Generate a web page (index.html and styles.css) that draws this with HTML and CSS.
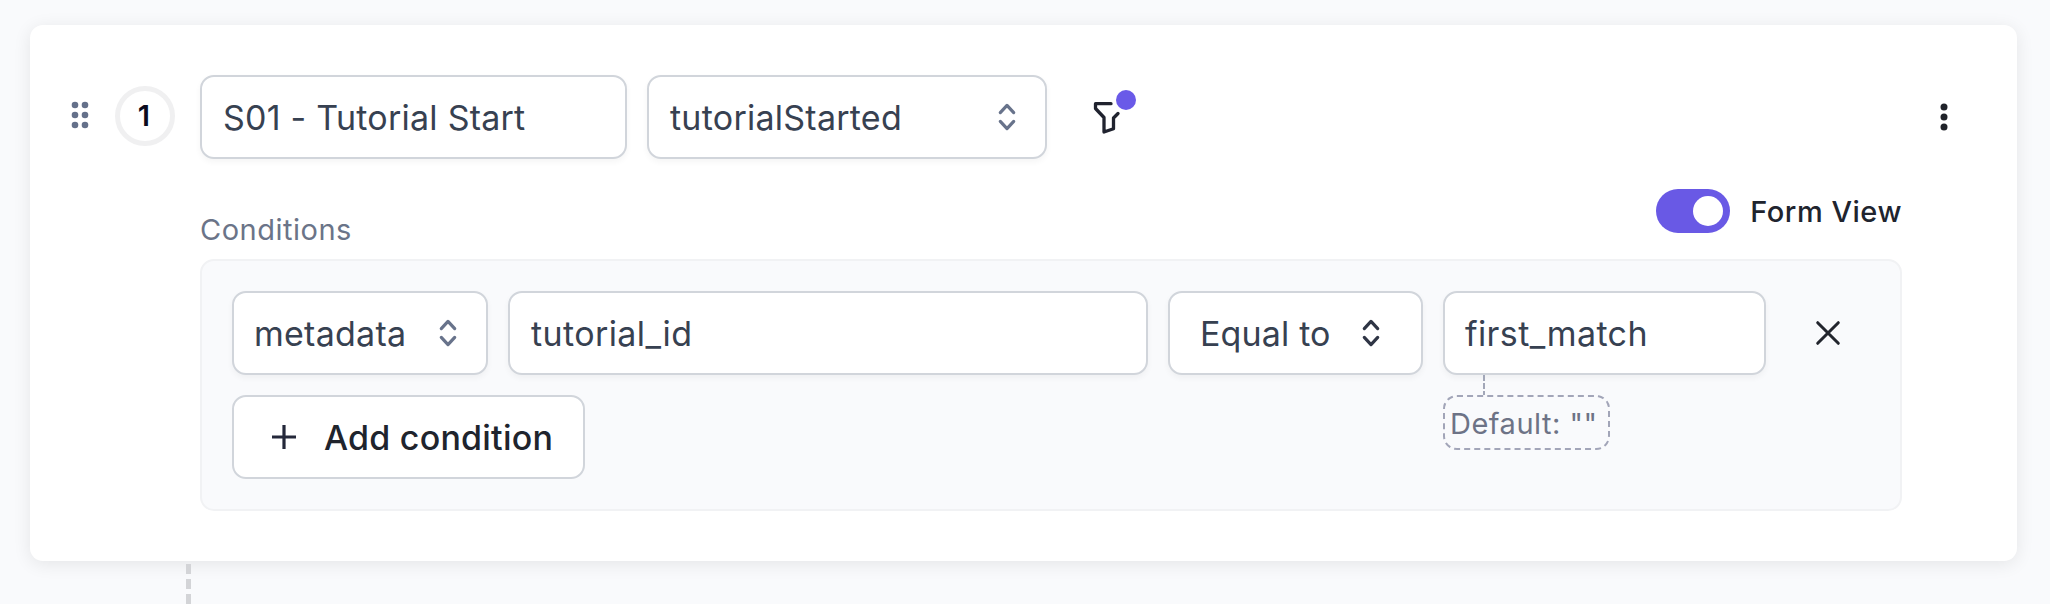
FILE: index.html
```html
<!DOCTYPE html>
<html lang="en">
<head>
<meta charset="utf-8">
<title>Step editor</title>
<link rel="stylesheet" href="styles.css">
</head>
<body>
<main class="card">
  <div class="step-row">
    <svg class="handle" width="20" height="30" viewBox="0 0 20 30" fill="currentColor"><circle cx="5" cy="5" r="3.3"/><circle cx="15" cy="5" r="3.3"/><circle cx="5" cy="15" r="3.3"/><circle cx="15" cy="15" r="3.3"/><circle cx="5" cy="25" r="3.3"/><circle cx="15" cy="25" r="3.3"/></svg>
    <div class="badge">1</div>
    <div class="field name"><span class="t-name">S01 - Tutorial Start</span></div>
    <div class="field event"><span class="t-event">tutorialStarted</span>
      <svg class="chev" width="20" height="30" viewBox="0 0 20 30"><path d="M3.3 10.6 10 3.4l6.7 7.2M3.3 19.4 10 26.6l6.7-7.2"/></svg>
    </div>
    <svg class="filter" width="46" height="46" viewBox="0 0 46 46"><path d="M21 13.7H5.500V18.500L14 27.500V42L23.500 38.800V28L28 23.500"/><circle cx="36" cy="10" r="10"/></svg>
    <svg class="kebab" width="10" height="30" viewBox="0 0 10 30" fill="currentColor"><circle cx="5" cy="5" r="3.500"/><circle cx="5" cy="15" r="3.500"/><circle cx="5" cy="25" r="3.500"/></svg>
  </div>
  <section class="conditions">
    <div class="heading">
      <span class="label">Conditions</span>
      <div class="view"><span class="toggle"><span class="knob"></span></span><span class="view-text">Form View</span></div>
    </div>
    <div class="panel">
      <div class="rule">
        <div class="field source"><span class="t-source">metadata</span>
          <svg class="chev" width="20" height="30" viewBox="0 0 20 30"><path d="M3.3 10.6 10 3.4l6.7 7.2M3.3 19.4 10 26.6l6.7-7.2"/></svg>
        </div>
        <div class="field key"><span class="t-key">tutorial_id</span></div>
        <div class="field operator"><span class="t-op">Equal to</span>
          <svg class="chev dark" width="20" height="30" viewBox="0 0 20 30"><path d="M3.3 10.6 10 3.4l6.7 7.2M3.3 19.4 10 26.6l6.7-7.2"/></svg>
        </div>
        <div class="field value"><span class="t-value">first_match</span>
          <div class="fallback"><span class="stem"></span><span class="hint">Default: ""</span></div>
        </div>
        <svg class="remove" width="28" height="28" viewBox="0 0 28 28"><path d="M3.7 3.7 24.3 24.3M24.3 3.7 3.7 24.3"/></svg>
      </div>
      <div class="add"><svg width="28" height="28" viewBox="0 0 28 28"><path d="M14 2v24M2 14h24"/></svg><span class="t-add">Add condition</span></div>
    </div>
  </section>
</main>
<div class="connector"><i></i><i></i><i></i></div>
</body>
</html>
```
FILE: styles.css
```css
* { box-sizing: border-box; }
body {
  margin: 0;
  height: 604px;
  overflow: hidden;
  padding: 25px 33px 0 30px;
  background: #f9fafc;
  font-family: Inter, "Liberation Sans", sans-serif;
  font-size: 34px;
  line-height: 44px;
  color: #374151;
  white-space: nowrap;
}
.card {
  height: 536px;
  padding: 50px 0 0 40px;
  border-radius: 13px;
  background: #fff;
  box-shadow: 0 3px 18px rgba(0, 0, 0, .085);
}
.step-row { display: flex; align-items: center; height: 84px; }
.handle { margin: 0 25px 4px 0; color: #64708a; }
.badge {
  width: 60px; height: 60px;
  margin: 0 25px 3px 0;
  padding-right: 2px;
  border: 5px solid #f0f0f1;
  border-radius: 50%;
  color: #0b0b1e;
  font-size: 29px; font-weight: 600; line-height: 50px;
  text-align: center;
}
.field {
  display: flex; align-items: center; justify-content: space-between;
  height: 84px;
  padding: 0 21px;
  border: 2px solid #d1d5db;
  border-radius: 14px;
  background: #fff;
  box-shadow: 0 3px 6px rgba(0, 0, 0, .045);
}
.field > span, .t-add { padding-top: 2px; }
.t-name { letter-spacing: .24px; }
.t-event { letter-spacing: .25px; }
.t-source { letter-spacing: .25px; }
.t-key { letter-spacing: .4px; }
.t-op { letter-spacing: .15px; }
.t-value { letter-spacing: .4px; }
.t-add { letter-spacing: .22px; }
.name { width: 427px; margin-right: 20px; }
.event { width: 400px; padding-right: 28px; }
.chev { fill: none; stroke: #68738b; stroke-width: 3.2; stroke-linecap: round; stroke-linejoin: round; }
.dark { stroke: #2f3545; }
.filter { align-self: flex-start; margin: 15px 0 0 43px; fill: none; stroke: #20232f; stroke-width: 3.3; stroke-linecap: round; stroke-linejoin: round; }
.filter circle { fill: #6a5ae8; stroke: none; }
.kebab { margin: 0 68px 0 auto; color: #20232a; }
.conditions { width: 1702px; margin-left: 130px; }
.heading { display: flex; justify-content: space-between; height: 100px; }
.label { padding-top: 49px; color: #6b7488; font-size: 29px; letter-spacing: .5px; }
.view { display: flex; align-items: center; gap: 20px; height: 44px; margin-top: 30px; }
.toggle { display: flex; align-items: center; justify-content: flex-end; width: 74px; height: 44px; padding: 0 7px; border-radius: 22px; background: #6959e5; }
.knob { width: 30px; height: 30px; border-radius: 50%; background: #fff; }
.view-text { padding-top: 1px; color: #20242e; font-size: 29px; font-weight: 500; letter-spacing: .52px; }
.panel { height: 252px; padding: 30px; border: 2px solid #f1f2f4; border-radius: 14px; background: #f9fafc; }
.rule { display: flex; align-items: center; gap: 20px; }
.source { width: 256px; padding: 0 28px 0 20px; }
.key { width: 640px; }
.operator { width: 255px; padding: 0 40px 0 30px; }
.value { position: relative; width: 323px; padding-left: 20px; }
.fallback { position: absolute; left: -2px; top: 82px; }
.stem { display: block; width: 2px; height: 20px; margin-left: 40px; background: repeating-linear-gradient(#a2a7b8 0 6px, transparent 6px 8px); }
.hint { display: block; width: 167px; height: 55px; padding: 1px 0 0 5px; border: 2px dashed #a2a5b8; border-radius: 14px; color: #6d7386; font-size: 29px; line-height: 51px; letter-spacing: .5px; }
.remove { margin-left: 28px; fill: none; stroke: #22252d; stroke-width: 3; stroke-linecap: round; }
.add { display: flex; align-items: center; gap: 26px; width: 353px; height: 84px; margin-top: 20px; padding-left: 36px; border: 2px solid #d1d5db; border-radius: 14px; background: #fff; color: #20242d; font-weight: 500; }
.add svg { fill: none; stroke: #24283a; stroke-width: 3.2; }
.connector { display: flex; flex-direction: column; gap: 5px; width: 5px; margin: 3px 0 0 156px; }
.connector i { width: 5px; height: 10px; background: #d3d4d7; }
```
